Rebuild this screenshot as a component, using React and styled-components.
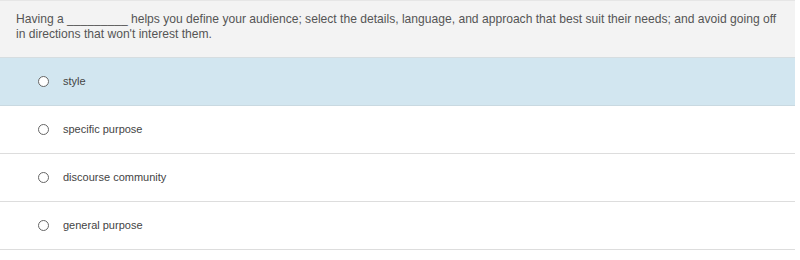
import styled, { createGlobalStyle } from "styled-components";
import { useState } from "react";

const GlobalStyle = createGlobalStyle`
  body {
    margin: 0;
    background: #fff;
    font-family: "Liberation Sans", Arial, sans-serif;
  }
`;

const Panel = styled.div`
  width: 795px;
`;

const Question = styled.div`
  background: #f3f3f3;
  border-top: 1px solid #e6e6e6;
  border-bottom: 1px solid #d6dde0;
  padding: 11px 16px 0;
  height: 45px;
  font-size: 12.1px;
  line-height: 15px;
  color: #555;
`;

const Option = styled.label`
  display: flex;
  align-items: center;
  gap: 14px;
  height: 48px;
  padding: 0 0 1px 38px;
  box-sizing: border-box;
  font-size: 11px;
  color: #444;
  cursor: pointer;
  background: ${(props) => (props.selected ? "#d2e6f0" : "#fff")};
  border-bottom: 1px solid ${(props) => (props.selected ? "#c9d9e1" : "#dddddd")};
`;

const Radio = styled.span`
  width: 11px;
  height: 11px;
  border-radius: 50%;
  border: 1px solid #666;
  background: #fff;
  box-sizing: border-box;
`;

const options = ["style", "specific purpose", "discourse community", "general purpose"];

const App = () => {
  const [selected, setSelected] = useState(0);
  return (
    <Panel>
      <GlobalStyle />
      <Question>
        Having a _________ helps you define your audience; select the details, language, and approach that best suit
        their needs; and avoid going off in directions that won't interest them.
      </Question>
      {options.map((o, i) => (
        <Option key={o} selected={i === selected} onClick={() => setSelected(i)}>
          <Radio />
          {o}
        </Option>
      ))}
    </Panel>
  );
};

export default App;
